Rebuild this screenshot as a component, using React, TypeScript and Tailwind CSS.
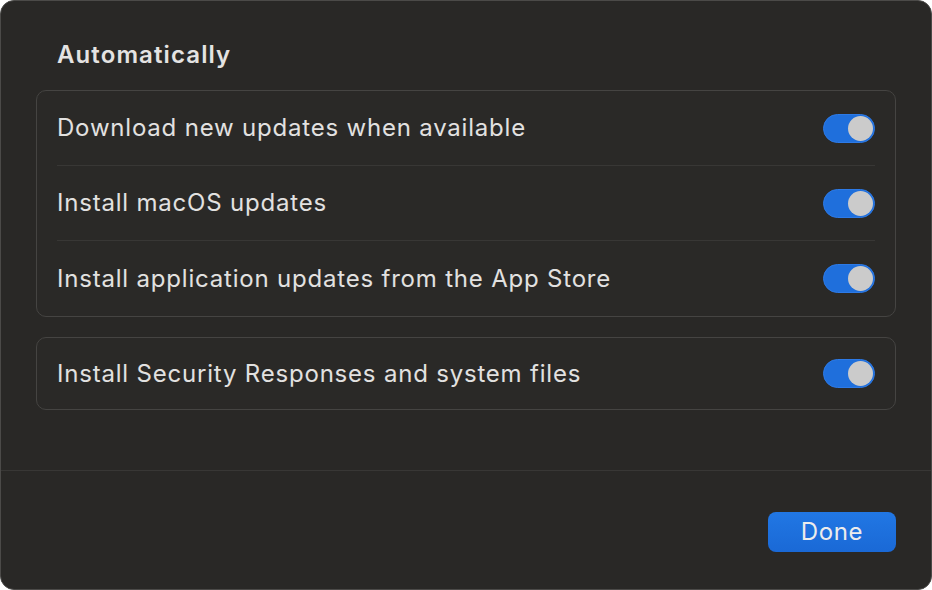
import React, { useState } from 'react';

const font = { fontFamily: 'Inter, "Noto Sans", sans-serif' };

const Toggle: React.FC<{ on: boolean; onClick: () => void }> = ({ on, onClick }) => (
  <button
    onClick={onClick}
    className={`relative w-[52px] h-[29px] rounded-full shrink-0 border ${
      on ? 'bg-[#1f6fdc] border-[#2d7ae6]' : 'bg-[#4a4948] border-[#55534f]'
    }`}
  >
    <span
      className={`absolute top-[1px] w-[25px] h-[25px] rounded-full bg-[#cbcbcb] ${
        on ? 'right-[1px]' : 'left-[1px]'
      }`}
    />
  </button>
);

const Row: React.FC<{ label: string; on: boolean; onClick: () => void; last?: boolean }> = ({
  label,
  on,
  onClick,
  last,
}) => (
  <div className="px-5">
    <div
      className={`flex items-center justify-between h-[75px] ${
        last ? '' : 'border-b border-[#383735]'
      }`}
    >
      <span className="text-[24px] text-[#e2e1e0] tracking-[0.8px]">{label}</span>
      <Toggle on={on} onClick={onClick} />
    </div>
  </div>
);

const App: React.FC = () => {
  const [flags, setFlags] = useState([true, true, true, true]);
  const flip = (i: number) => setFlags(flags.map((f, j) => (j === i ? !f : f)));

  return (
    <div
      className="w-[932px] h-[590px] bg-[#292826] rounded-[14px] border border-[#4b4a48] overflow-hidden flex flex-col"
      style={font}
    >
      <div className="px-[35px] pt-[38px] flex-1">
        <h2 className="ml-[21px] text-[24px] font-semibold text-[#e4e3e2] leading-[32px] tracking-[1.1px]">
          Automatically
        </h2>
        <div className="mt-[19px] rounded-[10px] border border-[#454442] bg-[#2a2927]">
          <Row label="Download new updates when available" on={flags[0]} onClick={() => flip(0)} />
          <Row label="Install macOS updates" on={flags[1]} onClick={() => flip(1)} />
          <Row
            label="Install application updates from the App Store"
            on={flags[2]}
            onClick={() => flip(2)}
            last
          />
        </div>
        <div className="mt-[20px] rounded-[10px] border border-[#454442] bg-[#2a2927]">
          <div className="px-5">
            <div className="flex items-center justify-between h-[71px]">
              <span className="text-[24px] text-[#e2e1e0] tracking-[0.8px]">
                Install Security Responses and system files
              </span>
              <Toggle on={flags[3]} onClick={() => flip(3)} />
            </div>
          </div>
        </div>
      </div>
      <div className="h-[119px] border-t border-[#383735] flex items-start justify-end pr-[35px] pt-[41px]">
        <button className="w-[128px] h-[40px] rounded-[8px] bg-gradient-to-b from-[#2177e4] to-[#1a69d6] text-[24px] text-[#ececec] leading-none tracking-[0.6px]">
          Done
        </button>
      </div>
    </div>
  );
};

export default App;
